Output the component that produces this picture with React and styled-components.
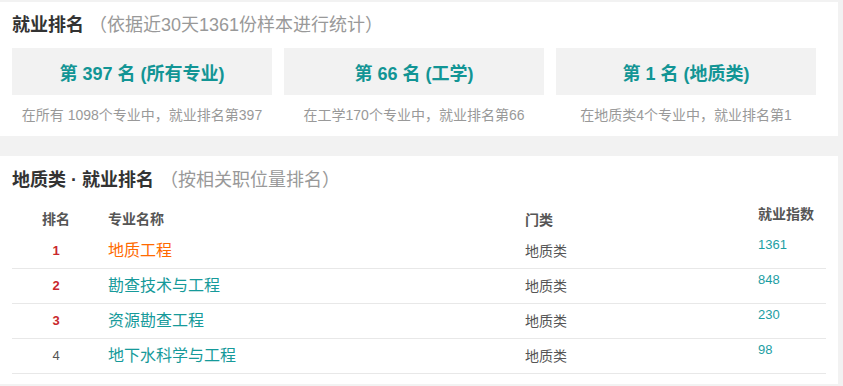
import React from "react"
import styled, { createGlobalStyle } from 'styled-components';

const GlobalStyle = createGlobalStyle`
body {
  margin: 0;
  background: #f2f2f2;
  font-family: "Liberation Sans", "Noto Sans CJK SC", sans-serif;
}
`;

const Page = styled.div`
width: 843px;
padding-top: 2px;
`;

const Panel = styled.section`
width: 838px;
box-sizing: border-box;
background: #fff;
padding: ${p => p.pad};
margin-bottom: ${p => p.gap || '0'};
`;

const Title = styled.h2`
margin: 0;
font-size: 18px;
line-height: 24px;
font-weight: bold;
color: #333;
`;

const TitleNote = styled.span`
font-weight: normal;
color: #999;
margin-left: ${p => p.offset || '0'};
`;

const CardRow = styled.div`
display: grid;
grid-template-columns: repeat(3, 260px);
column-gap: 12px;
margin-top: 11px;
`;

const Card = styled.div`
display: flex;
flex-direction: column;
align-items: center;
`;

const CardBox = styled.div`
width: 100%;
height: 47px;
background: #f2f2f2;
display: flex;
align-items: center;
justify-content: center;
font-size: 18px;
font-weight: bold;
color: #129595;
`;

const CardNote = styled.div`
margin-top: 10px;
font-size: 14px;
line-height: 20px;
color: #999;
`;

const Table = styled.div`
margin-top: 5px;
width: 814px;
`;

const Row = styled.div`
display: grid;
grid-template-columns: 88px 417px 233px 1fr;
height: ${p => p.head ? '37px' : '35px'};
box-sizing: border-box;
border-bottom: ${p => p.head ? 'none' : '1px solid #e8e8e8'};
`;

const Cell = styled.div`
padding: 0 8px;
display: flex;
align-items: ${p => p.top ? 'flex-start' : 'center'};
justify-content: ${p => p.center ? 'center' : 'flex-start'};
padding-top: ${p => p.pt || '0'};
font-size: 14px;
line-height: 16px;
color: #555;
`;

const HeadCell = styled(Cell)`
font-weight: bold;
align-items: flex-start;
`;

const Rank = styled.span`
font-size: 13px;
font-weight: ${p => p.top3 ? 'bold' : 'normal'};
color: ${p => p.top3 ? '#c9282d' : '#555'};
`;

const Major = styled.span`
font-size: 16px;
color: ${p => p.first ? '#ff6a00' : '#169a9a'};
`;

const Score = styled.span`
font-size: 13px;
color: #1c9ea3;
`;

const cards = [
  { title: '第 397 名 (所有专业)', note: '在所有 1098个专业中，就业排名第397' },
  { title: '第 66 名 (工学)', note: '在工学170个专业中，就业排名第66' },
  { title: '第 1 名 (地质类)', note: '在地质类4个专业中，就业排名第1' },
];

const rows = [
  { name: '地质工程', score: 1361 },
  { name: '勘查技术与工程', score: 848 },
  { name: '资源勘查工程', score: 230 },
  { name: '地下水科学与工程', score: 98 },
];

export default function App() {
  return (
    <Page>
      <GlobalStyle />
      <Panel pad="11px 12px 11px 12px" gap="20px">
        <Title>就业排名<TitleNote offset="5px">（依据近30天1361份样本进行统计）</TitleNote></Title>
        <CardRow>
          {cards.map(c => (
            <Card key={c.title}>
              <CardBox>{c.title}</CardBox>
              <CardNote>{c.note}</CardNote>
            </Card>
          ))}
        </CardRow>
      </Panel>
      <Panel pad="12px 12px 10px 12px">
        <Title>地质类 · 就业排名<TitleNote offset="6px">（按相关职位量排名）</TitleNote></Title>
        <Table>
          <Row head>
            <HeadCell center pt="14px">排名</HeadCell>
            <HeadCell pt="14px">专业名称</HeadCell>
            <HeadCell pt="15px">门类</HeadCell>
            <HeadCell pt="9px">就业指数</HeadCell>
          </Row>
          {rows.map((r, i) => (
            <Row key={r.name}>
              <Cell center><Rank top3={i < 3}>{i + 1}</Rank></Cell>
              <Cell><Major first={i === 0}>{r.name}</Major></Cell>
              <Cell>地质类</Cell>
              <Cell top pt="3px"><Score>{r.score}</Score></Cell>
            </Row>
          ))}
        </Table>
      </Panel>
    </Page>
  );
}
